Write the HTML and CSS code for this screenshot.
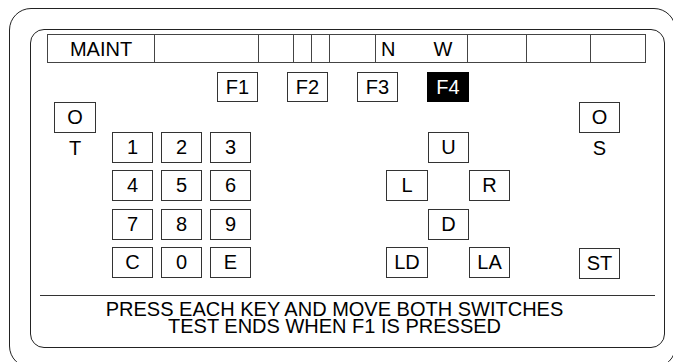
FILE: index.html
```html
<!DOCTYPE html>
<html lang="en">
<head>
    <meta charset="UTF-8">
    <meta name="viewport" content="width=device-width, initial-scale=1.0">
    <title>Maintenance Key Test</title>
    <link rel="stylesheet" href="styles.css">
</head>
<body>
    <div class="bezel">
        <div class="screen">
            <div class="status">
                <div class="cell c1">MAINT</div>
                <div class="cell c2"></div>
                <div class="cell c3"></div>
                <div class="cell c4"></div>
                <div class="cell c5"></div>
                <div class="cell c6"></div>
                <div class="cell c7"><span>N</span><span class="west">W</span></div>
                <div class="cell c8"></div>
                <div class="cell c9"></div>
                <div class="cell c10"></div>
            </div>

            <div class="fkeys">
                <div class="key fkey">F1</div>
                <div class="key fkey">F2</div>
                <div class="key fkey">F3</div>
                <div class="key fkey active">F4</div>
            </div>

            <div class="panel">
                <div class="switch">
                    <div class="key">O</div>
                    <div class="label">T</div>
                </div>

                <div class="keypad">
                    <div class="key">1</div>
                    <div class="key">2</div>
                    <div class="key">3</div>
                    <div class="key">4</div>
                    <div class="key">5</div>
                    <div class="key">6</div>
                    <div class="key">7</div>
                    <div class="key">8</div>
                    <div class="key">9</div>
                    <div class="key">C</div>
                    <div class="key">0</div>
                    <div class="key">E</div>
                </div>

                <div class="dpad">
                    <div class="key up">U</div>
                    <div class="key left">L</div>
                    <div class="key right">R</div>
                    <div class="key down">D</div>
                    <div class="key ld">LD</div>
                    <div class="key la">LA</div>
                </div>

                <div class="switch tall">
                    <div class="key">O</div>
                    <div class="label">S</div>
                    <div class="key st">ST</div>
                </div>
            </div>

            <hr class="divider">

            <div class="message">
                <div>PRESS EACH KEY AND MOVE BOTH SWITCHES</div>
                <div>TEST ENDS WHEN F1 IS PRESSED</div>
            </div>
        </div>
    </div>
</body>
</html>
```

FILE: styles.css
```css
html, body { margin: 0; height: 362px; overflow: hidden; background: #fff; }
body { font-family: "Liberation Sans", Arial, sans-serif; font-size: 20px; color: #000; }
* { box-sizing: border-box; }

.bezel { margin: 8px 0 0 9px; width: 667px; height: 360px; border: 1px solid #222; border-radius: 22px; padding: 20px 0 0 20px; }
.screen { width: 635px; height: 319px; border: 1px solid #222; border-radius: 14px; }

.status { display: flex; width: 599px; height: 29px; margin: 4px 0 0 16px; border: 1px solid #444; }
.cell { border-left: 1px solid #444; display: flex; align-items: center; line-height: 1; }
.c1 { width: 106px; border-left: 0; justify-content: center; }
.c2 { width: 104px; }
.c3 { width: 35px; }
.c4 { width: 18px; }
.c5 { width: 18px; }
.c6 { width: 46px; }
.c7 { width: 92px; padding-left: 5px; }
.c8 { width: 59px; }
.c9 { width: 64px; }
.c10 { width: 55px; }
.west { margin-left: 38px; }

.key { display: flex; align-items: center; justify-content: center; width: 41px; height: 31px; border: 1px solid #333; background: #fff; }

.fkeys { display: flex; gap: 29px; margin-top: 9px; padding-left: 186px; }
.fkey { height: 30px; }
.fkey.active { width: 42px; background: #000; border-color: #000; color: #fff; }

.panel { display: flex; align-items: flex-start; margin-left: 23px; }
.switch { display: flex; flex-direction: column; width: 42px; }
.switch .key { width: 42px; }
.label { height: 30px; line-height: 30px; text-align: center; }
.switch.tall { width: 41px; height: 177px; margin-left: 69px; }
.switch.tall .key { width: 41px; }
.switch .st { margin-top: auto; }

.keypad { display: grid; grid-template-columns: repeat(3, 41px); grid-auto-rows: 31px; gap: 7.33px 8px; margin: 30px 0 0 16px; }
.dpad { display: grid; grid-template-columns: 42px 41px 41px; grid-template-rows: repeat(4, 31px); row-gap: 7.33px; margin: 30px 0 0 135px; }
.dpad .key { width: auto; }
.up { grid-area: 1 / 2; }
.left { grid-area: 2 / 1; }
.right { grid-area: 2 / 3; }
.down { grid-area: 3 / 2; }
.ld { grid-area: 4 / 1; }
.la { grid-area: 4 / 3; }

.divider { margin: 16px 9px 0; border: 0; border-top: 1px solid #333; height: 0; }
.message { margin-top: 5px; padding-right: 26px; text-align: center; line-height: 17px; }
```
